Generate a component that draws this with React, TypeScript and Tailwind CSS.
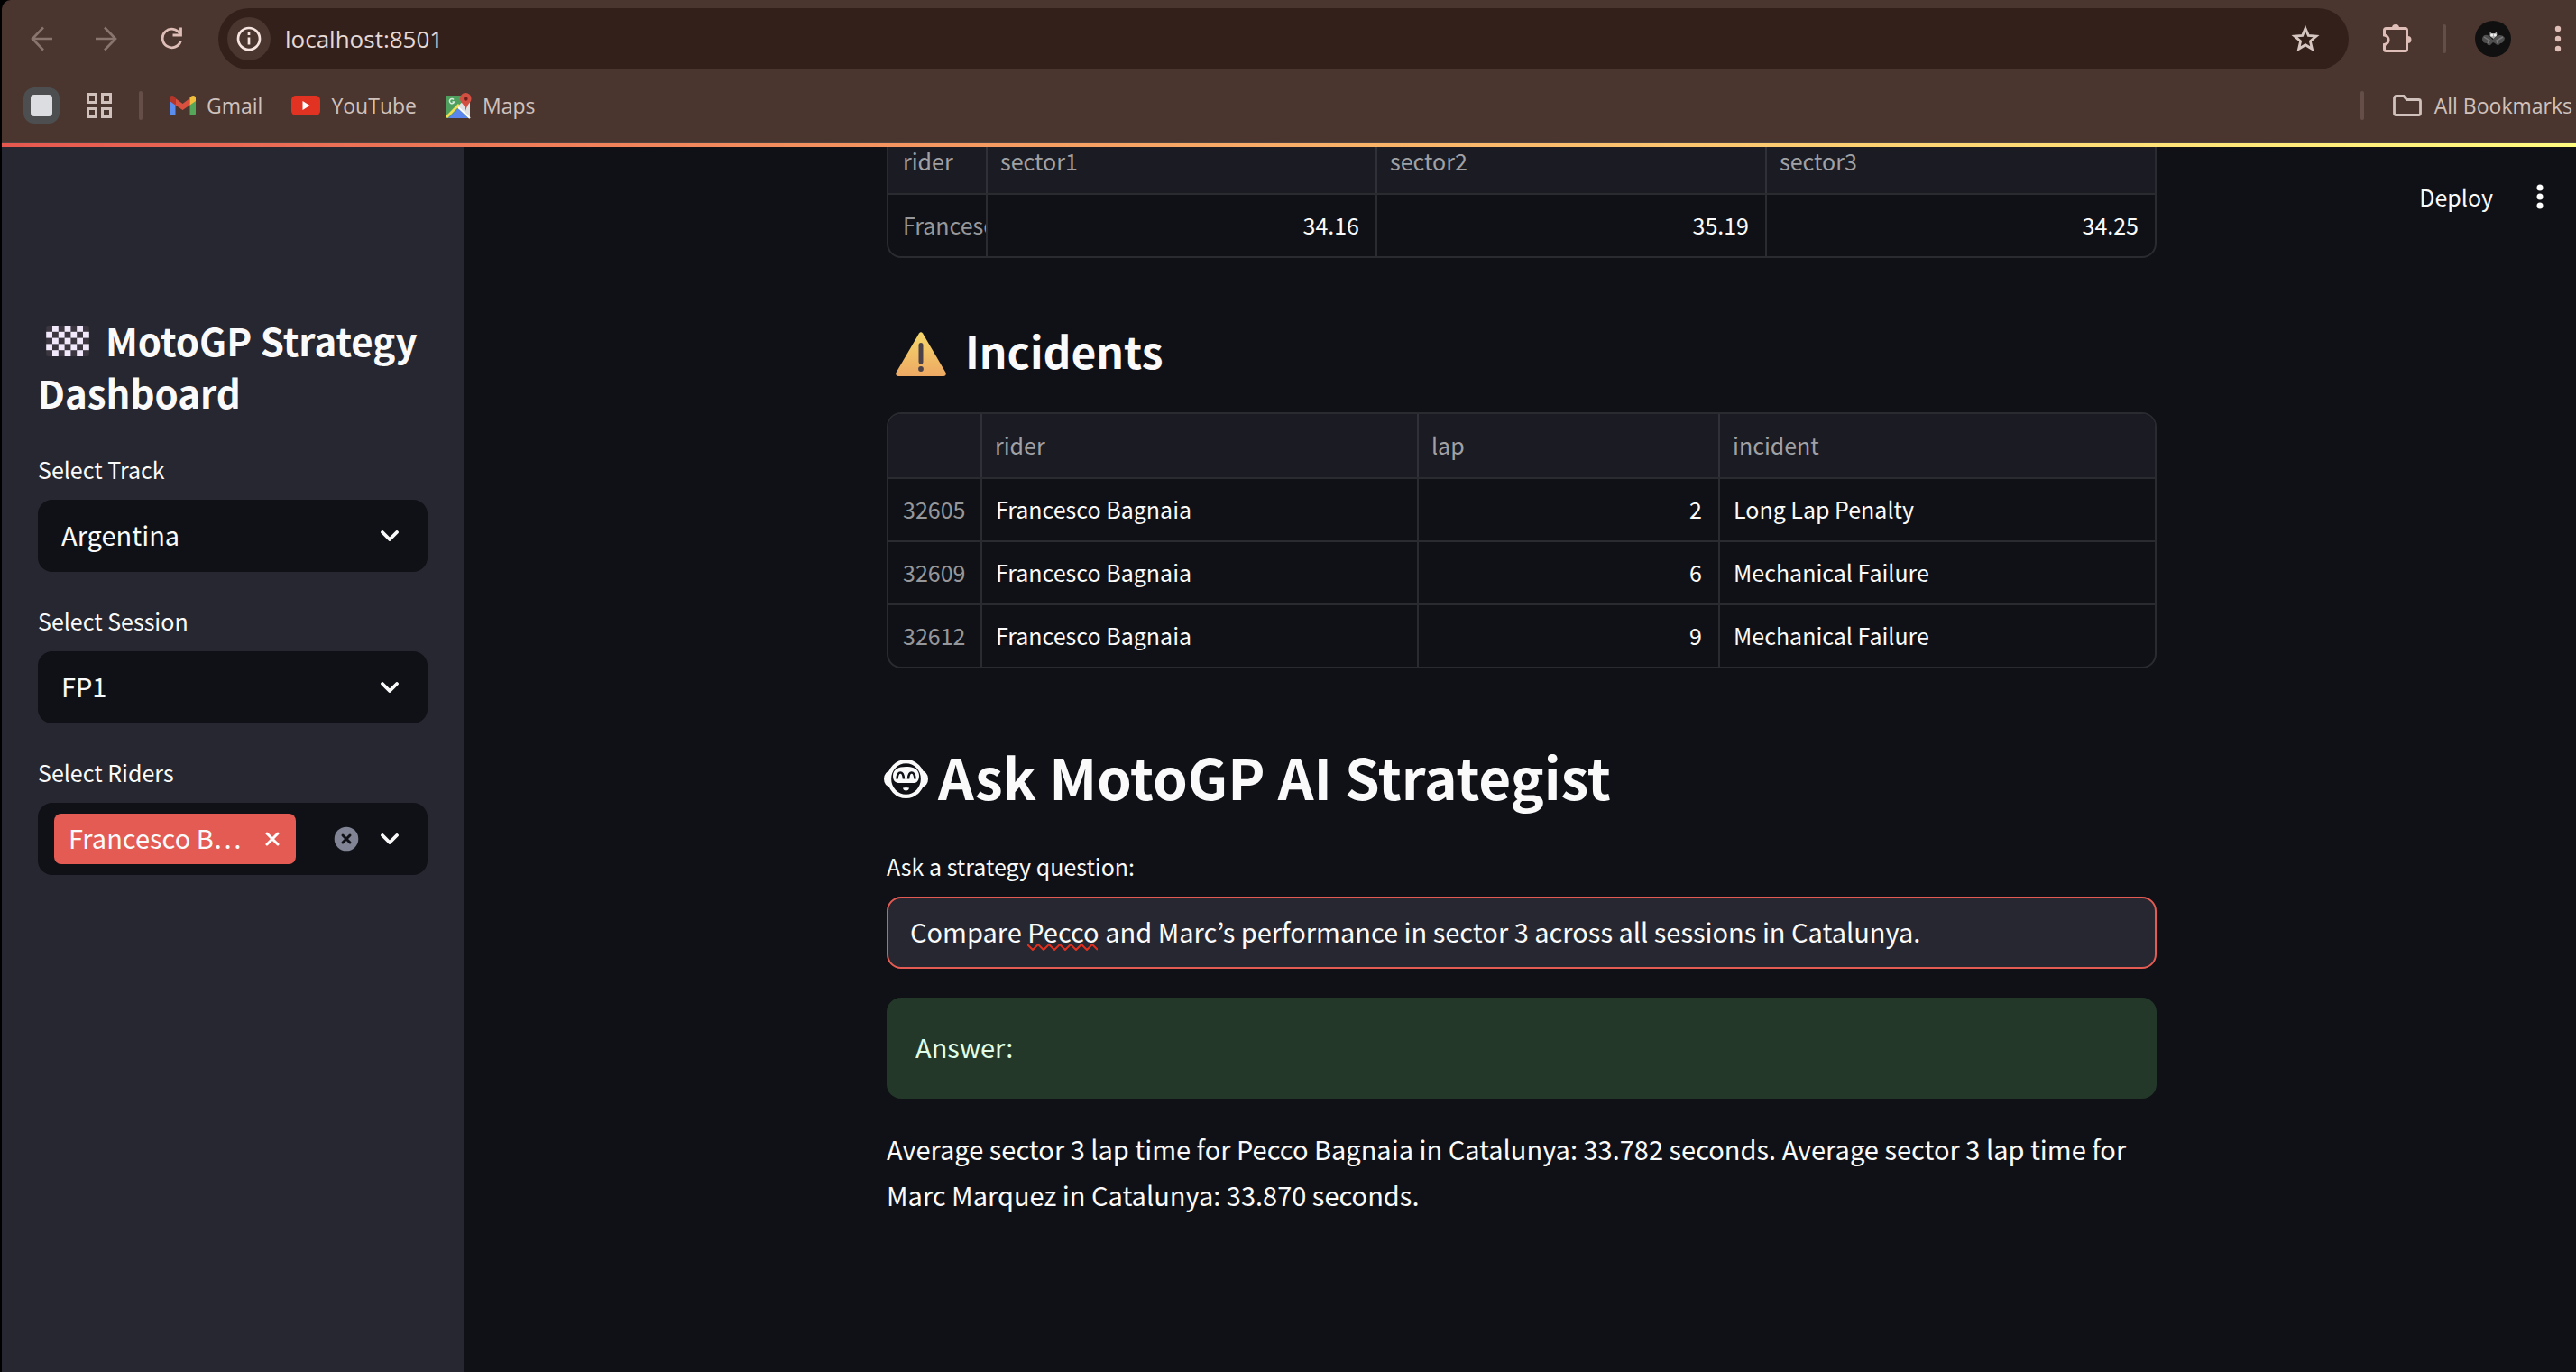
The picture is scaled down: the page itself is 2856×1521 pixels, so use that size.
import type { ReactNode } from "react";

function Chevron() {
  return (
    <svg viewBox="0 0 20 12" className="h-3 w-5" fill="none" stroke="#fafafa" strokeWidth="3.8" strokeLinecap="round" strokeLinejoin="round" aria-hidden="true">
      <path d="M2 2 L10 10 L18 2" />
    </svg>
  );
}

function BrowserToolbar() {
  return (
    <div className="flex h-[86px] items-center pr-3.5 pl-8 text-[#debeb6]">
      <div className="flex items-center gap-12 pr-10">
        <button aria-label="Back" className="text-[#8a746e]">
          <svg viewBox="0 0 24 30" className="h-[30px] w-6" fill="none" stroke="currentColor" strokeWidth="2.6">
            <path d="M24 15 H3 M14 2.500 L2 15 L14 27.500" />
          </svg>
        </button>
        <button aria-label="Forward" className="text-[#8a746e]">
          <svg viewBox="0 0 24 30" className="h-[30px] w-6" fill="none" stroke="currentColor" strokeWidth="2.6">
            <path d="M0 15 H21 M10 2.500 L22 15 L10 27.500" />
          </svg>
        </button>
        <button aria-label="Reload">
          <svg viewBox="0 0 24 26" className="h-[26px] w-6" fill="none" stroke="currentColor" strokeWidth="2.8">
            <path d="M21.500 7.500 A10.300 10.300 0 1 0 22.300 15.500" />
            <path d="M22.500 0.500 V9 H13.500" />
          </svg>
        </button>
      </div>
      <div className="flex h-[68px] flex-1 items-center rounded-full bg-[#33201b] pr-8 pl-2.5">
        <button aria-label="View site information" className="flex size-12 items-center justify-center rounded-full bg-[#4a352f] text-[#f5e4df]">
          <svg viewBox="0 0 28 28" className="size-7" fill="none" stroke="currentColor" strokeWidth="2.7">
            <circle cx="14" cy="14" r="12" />
            <path d="M14 12.500 V20.500 M14 7 V10" />
          </svg>
        </button>
        <input aria-label="Address" defaultValue="localhost:8501" className="ml-4 min-w-0 flex-1 bg-transparent text-[26px] text-[#e6d8d4] outline-none" />
        <button aria-label="Bookmark this tab" className="text-[#d6c6c1]">
          <svg viewBox="0 0 32 32" className="size-8" fill="none" stroke="currentColor" strokeWidth="2.8">
            <path d="M16 4.500 L19.300 12.400 L28 13.100 L21.400 18.700 L23.400 27.200 L16 22.700 L8.600 27.200 L10.600 18.700 L4 13.100 L12.700 12.400 Z" />
          </svg>
        </button>
      </div>
      <button aria-label="Extensions" className="ml-[38px]">
        <svg viewBox="0 0 32 34" className="h-[34px] w-8" fill="none" stroke="currentColor" strokeWidth="3">
          <path d="M3.500 5.500 H24.500 Q26.500 5.500 26.500 7.500 V28.500 Q26.500 30.500 24.500 30.500 H3.500 Q1.500 30.500 1.500 28.500 V23.500 A5.300 5.300 0 0 0 1.500 13 V7.500 Q1.500 5.500 3.500 5.500 Z" />
          <path d="M10 5 A4 4 0 0 1 18 5 Z M27.500 14 A4 4 0 0 1 27.500 22 Z" fill="currentColor" stroke="none" />
        </svg>
      </button>
      <span className="ml-[34px] h-8 w-1 rounded bg-[#664e48]" />
      <button aria-label="Profile" className="ml-8">
        <svg viewBox="0 0 40 40" className="size-10">
          <circle cx="20" cy="20" r="20" fill="#101010" />
          <path d="M8 20 Q9 15 14 16 L17 18 L19.500 21 L24 17 Q30 14 33 19 Q32 25 28 25 Q26 29 22 25 L20 24 L17 27 Q14 28 13 25 Q8 25 8 20 Z" fill="#4e4e4e" />
          <path d="M10 18 L16 22 L14 25 M31 18 L24 22 L25 25" stroke="#777" strokeWidth="1.500" fill="none" />
          <path d="M16.500 12.500 L18.500 14 H22 L24 12.500 L24.500 16 L20.500 20 L16.500 17 Z" fill="#a9a9a9" />
          <circle cx="18.700" cy="16" r="1.500" fill="#f0f0f0" />
          <circle cx="22.300" cy="16" r="1.500" fill="#f0f0f0" />
        </svg>
      </button>
      <button aria-label="Browser menu" className="ml-[46px]">
        <svg viewBox="0 0 12 32" className="h-8 w-3" fill="currentColor">
          <circle cx="6" cy="5" r="3.200" />
          <circle cx="6" cy="16" r="3.200" />
          <circle cx="6" cy="27" r="3.200" />
        </svg>
      </button>
    </div>
  );
}

function GmailIcon() {
  return (
    <svg viewBox="0 0 29 22" className="h-[22px] w-[29px]" aria-hidden="true">
      <path d="M0 5 V20 Q0 22 2 22 H6.500 V9 Z" fill="#5b8def" />
      <path d="M29 5 V20 Q29 22 27 22 H22.500 V9 Z" fill="#56a65a" />
      <path d="M6.500 3 L14.500 9 L22.500 3 V10.500 L14.500 16 L6.500 10.500 Z" fill="#d9503f" />
      <path d="M0 3 Q0 0 3 0 Q4.500 0 6.500 2 V10.500 L0 6 Z" fill="#b5352a" />
      <path d="M29 3 Q29 0 26 0 Q24.500 0 22.500 2 V10.500 L29 6 Z" fill="#f0bd3c" />
    </svg>
  );
}

function YouTubeIcon() {
  return (
    <svg viewBox="0 0 32 22" className="h-[22px] w-8" aria-hidden="true">
      <rect width="32" height="22" rx="5" fill="#e23322" />
      <path d="M12.500 6 L20.500 11 L12.500 16 Z" fill="#fff" />
    </svg>
  );
}

function MapsIcon() {
  return (
    <svg viewBox="0 0 29 29" className="size-[29px]" aria-hidden="true">
      <path d="M1 3 H27 V28 H1 Z" fill="#4f9f5f" />
      <path d="M27 8 V28 L13 15 L20 9 Z" fill="#dfe1e3" />
      <path d="M3 28 L14 17 L25 28 Z" fill="#5b86ee" />
      <path d="M1 27 L15 13" stroke="#f3df55" strokeWidth="3" />
      <path d="M14 16 L27 28" stroke="#fff" strokeWidth="2" />
      <path d="M9 7.500 A2.600 2.600 0 1 0 9.500 10 H7.500" stroke="#d5ecd9" strokeWidth="1.500" fill="none" />
      <path d="M22 0 A6.300 6.300 0 0 1 28.500 6.500 C28.500 11 23.500 12 22.500 20 C21.500 12 16 11 16 6.500 A6.300 6.300 0 0 1 22 0 Z" fill="#d34f41" />
      <circle cx="22.300" cy="6.500" r="2.300" fill="#6e1f1a" />
    </svg>
  );
}

function Bookmark({ icon, label }: { icon: ReactNode; label: string }) {
  return (
    <a href="#" className="flex items-center gap-3">
      {icon}
      {label}
    </a>
  );
}

function BookmarksBar() {
  return (
    <nav aria-label="Bookmarks" className="flex h-[71px] items-center pr-1 pb-[9px] pl-6 text-[23px] text-[#d0c1bc]">
      <button aria-label="Tab group" className="flex size-10 items-center justify-center rounded-xl bg-[#4c4e4f]">
        <span className="size-6 rounded bg-[#dcdde1]" />
      </button>
      <button aria-label="Apps" className="ml-[30px]">
        <svg viewBox="0 0 28 28" className="size-7" fill="none" stroke="currentColor" strokeWidth="3">
          <path d="M1.500 1.500 H10.500 V10.500 H1.500 Z M17.500 1.500 H26.500 V10.500 H17.500 Z M1.500 17.500 H10.500 V26.500 H1.500 Z M17.500 17.500 H26.500 V26.500 H17.500 Z" />
        </svg>
      </button>
      <span className="mx-[30px] h-8 w-1 rounded bg-[#664e48]" />
      <div className="flex gap-8">
        <Bookmark icon={<GmailIcon />} label="Gmail" />
        <Bookmark icon={<YouTubeIcon />} label="YouTube" />
        <Bookmark icon={<MapsIcon />} label="Maps" />
      </div>
      <span className="mr-8 ml-auto h-8 w-1 rounded bg-[#664e48]" />
      <button className="flex items-center gap-[14px]">
        <svg viewBox="0 0 32 24" className="h-6 w-8" fill="none" stroke="currentColor" strokeWidth="2.8" aria-hidden="true">
          <path d="M4 1.500 H12 L15.500 5.500 H28.500 Q30.500 5.500 30.500 7.500 V20.500 Q30.500 22.500 28.500 22.500 H3.500 Q1.500 22.500 1.500 20.500 V4 Q1.500 1.500 4 1.500 Z" />
        </svg>
        All Bookmarks
      </button>
    </nav>
  );
}

function CheckeredFlag() {
  const cells = Array.from({ length: 35 }, (_, i) => i).filter((i) => i % 2 === 1);
  return (
    <svg viewBox="0 0 49 35" className="mr-[18px] ml-[9px] inline-block h-[34px] w-12 align-baseline" role="img" aria-label="Checkered flag">
      <rect width="49" height="35" rx="2" fill="#3b363f" />
      {cells.map((i) => (
        <rect key={i} x={(i % 7) * 7} y={Math.floor(i / 7) * 7} width="7" height="7" fill="#f1e9fb" />
      ))}
    </svg>
  );
}

function SelectField({ id, label, options }: { id: string; label: string; options: string[] }) {
  return (
    <div>
      <label htmlFor={id} className="mb-3 block text-[25px] leading-[44px]">{label}</label>
      <div className="relative">
        <select id={id} className="block h-20 w-full appearance-none rounded-2xl bg-[#0f1116] px-[26px] pb-0.5 text-[29px] outline-none">
          {options.map((o) => (
            <option key={o}>{o}</option>
          ))}
        </select>
        <span className="pointer-events-none absolute inset-y-0 right-8 flex items-center">
          <Chevron />
        </span>
      </div>
    </div>
  );
}

function Sidebar() {
  return (
    <aside className="w-[512px] shrink-0 bg-[#262730] px-10 pt-[189px]">
      <h1 className="mb-[34px] text-[42px] leading-[58px] font-bold">
        <CheckeredFlag />
        MotoGP Strategy Dashboard
      </h1>
      <div className="flex flex-col gap-8">
        <SelectField id="track" label="Select Track" options={["Argentina", "Catalunya"]} />
        <SelectField id="session" label="Select Session" options={["FP1", "FP2"]} />
        <div>
          <p id="riders-label" className="mb-3 text-[25px] leading-[44px]">Select Riders</p>
          <div role="group" aria-labelledby="riders-label" className="flex h-20 items-center rounded-2xl bg-[#0f1116] pr-8 pl-[18px]">
            <span className="flex h-14 w-[268px] items-center justify-between rounded-lg bg-[#e45b53] pr-[18px] pl-4 text-[29px] leading-[52px]">
              <span className="pb-1 whitespace-nowrap">Francesco B…</span>
              <button aria-label="Remove Francesco Bagnaia">
                <svg viewBox="0 0 16 16" className="size-4" fill="none" stroke="#fff" strokeWidth="3" strokeLinecap="round">
                  <path d="M2 2 L14 14 M14 2 L2 14" />
                </svg>
              </button>
            </span>
            <button aria-label="Clear all" className="mr-6 ml-auto">
              <svg viewBox="0 0 28 28" className="size-7" fill="none">
                <circle cx="14" cy="14" r="13.300" fill="#808495" />
                <path d="M10 10 L18 18 M18 10 L10 18" stroke="#0f1116" strokeWidth="3" strokeLinecap="round" />
              </svg>
            </button>
            <button aria-label="Open riders list"><Chevron /></button>
          </div>
        </div>
      </div>
    </aside>
  );
}

const headCell = "h-[70px] border-l-2 border-[#303138] px-[14px] pb-0.5 text-left font-normal text-[#a0a1a5] first:border-l-0 first:px-4";
const bodyCell = "h-[70px] truncate border-t-2 border-l-2 border-[#2a2b31] pr-[18px] pb-[3px] pl-[15px]";
const indexCell = "h-[70px] overflow-hidden border-t-2 border-[#2a2b31] pb-[3px] pl-4 text-left font-normal whitespace-nowrap text-[#96979b]";

function TableFrame({ children }: { children: ReactNode }) {
  return (
    <div className="overflow-hidden rounded-2xl border-2 border-[#2a2b31]">
      <table className="w-full table-fixed border-separate border-spacing-0 text-[25px] leading-9">{children}</table>
    </div>
  );
}

function SectorTable() {
  return (
    <TableFrame>
      <colgroup>
        <col className="w-[108px]" />
        <col />
        <col />
        <col />
      </colgroup>
      <thead className="bg-[#1a1b23]">
        <tr>
          {["rider", "sector1", "sector2", "sector3"].map((h) => (
            <th key={h} scope="col" className={headCell}>{h}</th>
          ))}
        </tr>
      </thead>
      <tbody>
        <tr>
          <th scope="row" className={indexCell}>Francesco Bagnaia</th>
          {["34.16", "35.19", "34.25"].map((v) => (
            <td key={v} className={`${bodyCell} text-right`}>{v}</td>
          ))}
        </tr>
      </tbody>
    </TableFrame>
  );
}

const incidents = [
  { id: 32605, rider: "Francesco Bagnaia", lap: 2, incident: "Long Lap Penalty" },
  { id: 32609, rider: "Francesco Bagnaia", lap: 6, incident: "Mechanical Failure" },
  { id: 32612, rider: "Francesco Bagnaia", lap: 9, incident: "Mechanical Failure" },
];

function IncidentTable() {
  return (
    <TableFrame>
      <colgroup>
        <col className="w-[102px]" />
        <col />
        <col className="w-[334px]" />
        <col />
      </colgroup>
      <thead className="bg-[#1a1b23]">
        <tr>
          <td className={headCell} />
          {["rider", "lap", "incident"].map((h) => (
            <th key={h} scope="col" className={headCell}>{h}</th>
          ))}
        </tr>
      </thead>
      <tbody>
        {incidents.map((r) => (
          <tr key={r.id}>
            <th scope="row" className={indexCell}>{r.id}</th>
            <td className={bodyCell}>{r.rider}</td>
            <td className={`${bodyCell} text-right`}>{r.lap}</td>
            <td className={bodyCell}>{r.incident}</td>
          </tr>
        ))}
      </tbody>
    </TableFrame>
  );
}

function WarningIcon() {
  return (
    <svg viewBox="0 -8 56 57" className="h-[57px] w-14" role="img" aria-label="Warning">
      <defs>
        <linearGradient id="warn" x1="0" y1="0" x2="0" y2="1">
          <stop offset="0" stopColor="#f5d76a" />
          <stop offset="1" stopColor="#eda963" />
        </linearGradient>
      </defs>
      <path d="M26 1.500 Q28 -1 30 1.500 L55.500 45 Q56.500 49 53 49 H3 Q-0.500 49 0.500 45 Z" fill="url(#warn)" />
      <path d="M28 14.500 V33" stroke="#4a4149" strokeWidth="5" strokeLinecap="round" />
      <circle cx="28" cy="41" r="2.900" fill="#4a4149" />
    </svg>
  );
}

function RobotFace() {
  return (
    <svg viewBox="0 -6 49 49" className="size-[49px]" aria-hidden="true">
      <ellipse cx="24.500" cy="21.500" rx="18.500" ry="19.300" fill="none" stroke="#fafafa" strokeWidth="4.300" />
      <path d="M7.500 12 V31 Q0 29 0 21.500 Q0 14 7.500 12 Z M41.500 12 V31 Q49 29 49 21.500 Q49 14 41.500 12 Z" fill="#fafafa" />
      <path d="M24.500 8 C33 8 39 11 39 18 C39 24 36 26 32 26 H17 C13 26 10 24 10 18 C10 11 16 8 24.500 8 Z" fill="#fafafa" />
      <path d="M14.500 21.500 Q15 14.500 18.300 14.500 Q21.500 14.500 22 21.500 M27 21.500 Q27.500 14.500 30.700 14.500 Q34 14.500 34.500 21.500" fill="none" stroke="#0f1116" strokeWidth="2.600" />
      <path d="M21 31.500 Q24.500 30.500 28 31.500 Q27.500 34.500 24.500 34.500 Q21.500 34.500 21 31.500 Z" fill="#fafafa" />
    </svg>
  );
}

function Main() {
  return (
    <main className="relative flex-1 overflow-hidden pl-1">
      <div className="absolute top-[37px] right-[34px] flex items-center gap-[46px] text-[25px] leading-[44px]">
        <button>Deploy</button>
        <button aria-label="Main menu">
          <svg viewBox="0 0 12 28" className="h-7 w-3" fill="#fff">
            <circle cx="6" cy="4" r="3.500" />
            <circle cx="6" cy="14" r="3.500" />
            <circle cx="6" cy="24" r="3.500" />
          </svg>
        </button>
      </div>
      <div className="mx-auto -mt-[17px] max-w-[1408px]">
        <SectorTable />

        <h2 className="mt-[68px] mb-[35px] flex items-center gap-[21px] pl-[10px] text-[48px] leading-[68px] font-bold">
          <WarningIcon />
          Incidents
        </h2>
        <IncidentTable />

        <h1 className="mt-[76px] mb-[35px] -ml-[3px] flex items-center gap-[11px] text-[62px] leading-[86px] font-bold">
          <RobotFace />
          Ask MotoGP AI Strategist
        </h1>

        <label htmlFor="question" className="mb-3 block text-[25px] leading-[44px]">Ask a strategy question:</label>
        <div className="relative">
          <input
            id="question"
            spellCheck={false}
            defaultValue="Compare Pecco and Marc’s performance in sector 3 across all sessions in Catalunya."
            className="block h-20 w-full rounded-2xl border-2 border-[#e45b53] bg-[#262730] px-6 pb-1 text-[29px] outline-none"
          />
          <svg viewBox="0 0 78 8" className="pointer-events-none absolute top-[52px] left-[156px] h-2 w-[78px]" fill="none" stroke="#e0301f" strokeWidth="2" aria-hidden="true">
            <path d="M0 1 L6 7 L12 1 L18 7 L24 1 L30 7 L36 1 L42 7 L48 1 L54 7 L60 1 L66 7 L72 1 L78 7" />
          </svg>
        </div>

        <div role="status" className="mt-8 flex h-28 items-center rounded-2xl bg-[#243829] px-8 pb-0.5 text-[29px] text-[#dffde9]">
          Answer:
        </div>

        <p className="mt-[30px] text-[29px] leading-[51px]">
          Average sector 3 lap time for Pecco Bagnaia in Catalunya: 33.782 seconds. Average sector 3 lap time for Marc Marquez in Catalunya: 33.870 seconds.
        </p>
      </div>
    </main>
  );
}

export default function App() {
  return (
    <div className="flex min-h-screen flex-col bg-black pl-0.5 text-[#fafafa]">
      <header className="rounded-tl-[10px] border-b-2 border-[#4f4341] bg-[#4a352f] font-['Open_Sans',sans-serif]">
        <BrowserToolbar />
        <BookmarksBar />
      </header>
      <div className="relative flex flex-1 bg-[#0f1116] font-['Noto_Sans_CJK_KR',sans-serif]">
        <Sidebar />
        <Main />
        <div className="absolute inset-x-0 top-0 h-1 bg-linear-to-r from-[#e6584f] to-[#fffc80]" />
      </div>
    </div>
  );
}
